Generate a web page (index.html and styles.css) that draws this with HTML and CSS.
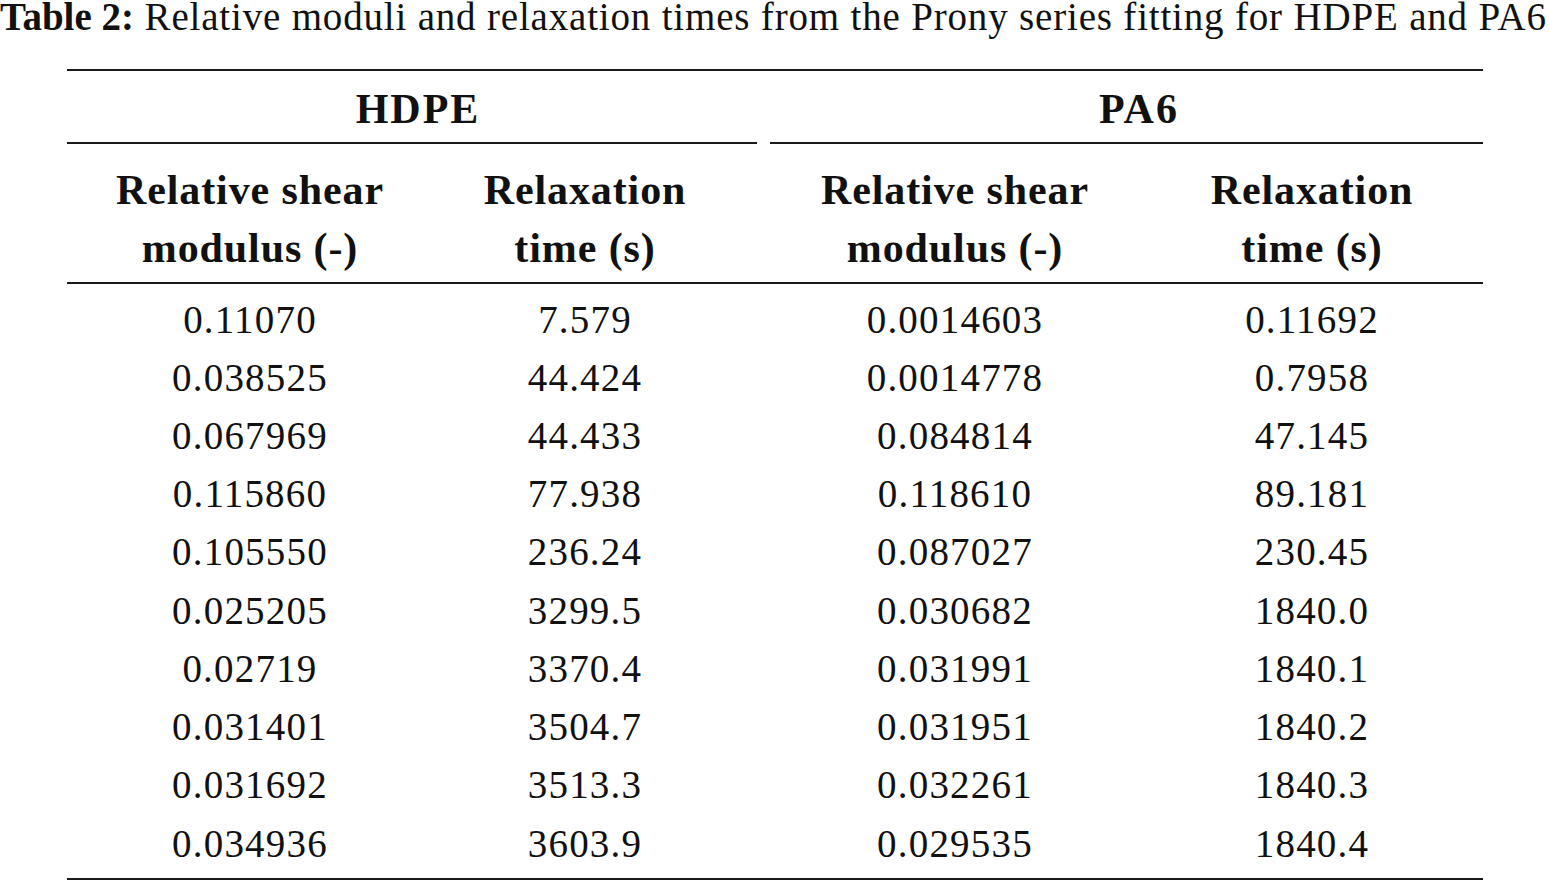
FILE: index.html
```html
<!DOCTYPE html>
<html lang="en">
<head>
<meta charset="utf-8">
<title>Table 2</title>
<link rel="stylesheet" href="styles.css">
</head>
<body>
<div class="page">
  <p class="caption"><b>Table 2:</b> Relative moduli and relaxation times from the Prony series fitting for HDPE and PA6</p>
  <div class="table">
    <div class="groups">
      <div class="group group-hdpe">HDPE</div>
      <div class="group group-pa6">PA6</div>
    </div>
    <div class="grid head">
      <div class="cell c1">Relative shear<br>modulus (-)</div>
      <div class="cell c2">Relaxation<br>time (s)</div>
      <div class="cell c3">Relative shear<br>modulus (-)</div>
      <div class="cell c4">Relaxation<br>time (s)</div>
    </div>
    <div class="grid body">
      <div class="cell c1">0.11070</div><div class="cell c2">7.579</div><div class="cell c3">0.0014603</div><div class="cell c4">0.11692</div>
      <div class="cell c1">0.038525</div><div class="cell c2">44.424</div><div class="cell c3">0.0014778</div><div class="cell c4">0.7958</div>
      <div class="cell c1">0.067969</div><div class="cell c2">44.433</div><div class="cell c3">0.084814</div><div class="cell c4">47.145</div>
      <div class="cell c1">0.115860</div><div class="cell c2">77.938</div><div class="cell c3">0.118610</div><div class="cell c4">89.181</div>
      <div class="cell c1">0.105550</div><div class="cell c2">236.24</div><div class="cell c3">0.087027</div><div class="cell c4">230.45</div>
      <div class="cell c1">0.025205</div><div class="cell c2">3299.5</div><div class="cell c3">0.030682</div><div class="cell c4">1840.0</div>
      <div class="cell c1">0.02719</div><div class="cell c2">3370.4</div><div class="cell c3">0.031991</div><div class="cell c4">1840.1</div>
      <div class="cell c1">0.031401</div><div class="cell c2">3504.7</div><div class="cell c3">0.031951</div><div class="cell c4">1840.2</div>
      <div class="cell c1">0.031692</div><div class="cell c2">3513.3</div><div class="cell c3">0.032261</div><div class="cell c4">1840.3</div>
      <div class="cell c1">0.034936</div><div class="cell c2">3603.9</div><div class="cell c3">0.029535</div><div class="cell c4">1840.4</div>
    </div>
  </div>
</div>
</body>
</html>
```

FILE: styles.css
```css
html, body {
  margin: 0;
  padding: 0;
  background: #ffffff;
}

body {
  font-family: "Liberation Serif", "Times New Roman", serif;
  color: #111111;
  font-size: 39px;
}

.page {
  width: 1549px;
  overflow: hidden;
}

.caption {
  margin: 0 0 35px 0;
  height: 34px;
  line-height: 34px;
  white-space: nowrap;
  letter-spacing: 0.82px;
}

.caption b {
  font-weight: bold;
  letter-spacing: 0;
}

.table {
  margin-left: 67px;
  width: 1416px;
  border-top: 2px solid #1a1a1a;
  border-bottom: 2px solid #1a1a1a;
}

.groups {
  display: flex;
  gap: 13px;
  font-weight: bold;
  font-size: 42px;
  letter-spacing: 2px;
  line-height: 58.2px;
}

.group {
  border-bottom: 2px solid #1a1a1a;
  padding-top: 8.7px;
  padding-bottom: 4px;
  text-align: center;
}

.group-hdpe {
  width: 678px;
  padding-left: 12px;
}

.group-pa6 {
  width: 688px;
  padding-left: 25px;
}

.grid {
  display: grid;
  grid-template-columns: 366px 304px 436px 310px;
  line-height: 58.2px;
}

.head {
  font-weight: bold;
  font-size: 42px;
  letter-spacing: 0.9px;
  padding-top: 16.7px;
  padding-bottom: 5px;
  border-bottom: 2px solid #1a1a1a;
}

.body {
  letter-spacing: 1.2px;
  padding-top: 6.7px;
  padding-bottom: 5px;
}

.cell {
  text-align: center;
  white-space: nowrap;
}

.c4 {
  padding-right: 32px;
}
```
